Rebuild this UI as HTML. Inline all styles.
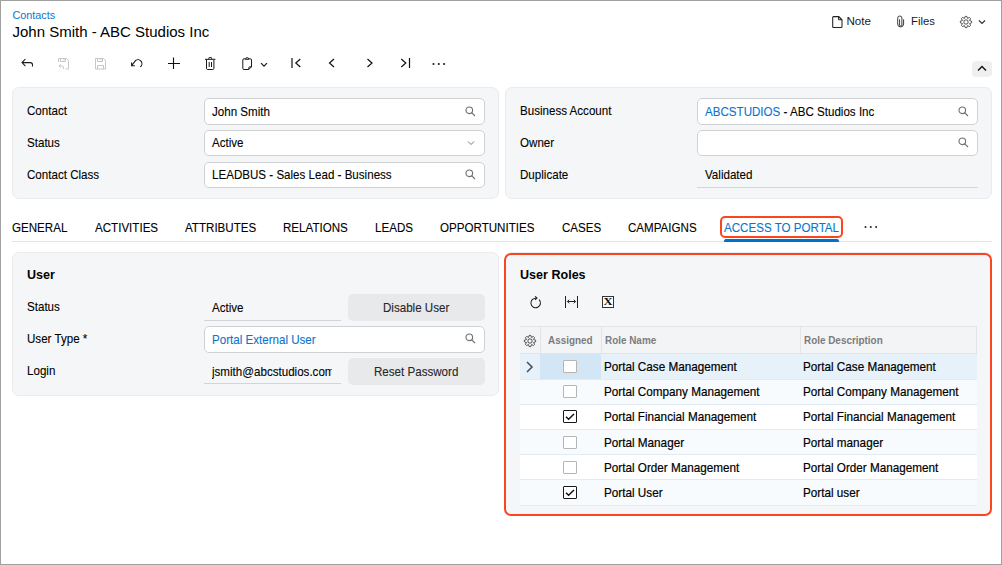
<!DOCTYPE html>
<html><head><meta charset="utf-8">
<style>
*{box-sizing:border-box;margin:0;padding:0}
html,body{width:1002px;height:565px;overflow:hidden;background:#fff}
body{position:relative;font-family:"Liberation Sans",sans-serif;font-size:11.6px;color:#000}
.frame{position:absolute;left:0;top:0;width:1002px;height:565px;border:1px solid #a0a0a0;z-index:50;pointer-events:none}
.a{position:absolute;white-space:nowrap}
.t{position:absolute;white-space:nowrap;line-height:14px;height:14px}
.panel{position:absolute;background:#f5f6f8;border:1px solid #e9ebee;border-radius:7px}
.fld{position:absolute;background:#fff;border:1px solid #cfd1d4;border-radius:5px;height:27px}
.ro{position:absolute;border-bottom:1px solid #d2d4d7;height:26px}
.btn{position:absolute;background:#e8e9eb;border-radius:5px;height:27px;text-align:center;line-height:27px;color:#262626}
svg{position:absolute;overflow:visible}
.blue{color:#0b75cd}
.s{font-size:12.4px;transform:scaleX(.935);transform-origin:0 0;-webkit-text-stroke:0.1px currentColor}
.g{transform:scaleX(.945);-webkit-text-stroke:0.2px currentColor}
.hd{font-weight:bold;font-size:10.6px;color:#7c7c7c;transform:scaleX(.935);transform-origin:0 0}
.cbx{width:13.5px;height:13px;background:#fff;border:1px solid #b5b5b5;border-radius:1px}
.cbx.on{border:1.4px solid #1a1a1a}
</style></head><body>
<div class="frame"></div>

<!-- header -->
<div class="t blue" style="left:12.5px;top:8px;font-size:10.8px">Contacts</div>
<div class="t" style="left:12.5px;top:23px;font-size:15px;line-height:17px;height:17px">John Smith - ABC Studios Inc</div>

<!-- top right -->
<svg style="left:831.5px;top:15.5px" width="11" height="12" viewBox="0 0 11 12"><path d="M1.5 .6h5.3l3.2 3.2v6.9a.8.8 0 0 1-.8.8H1.5a.8.8 0 0 1-.8-.8V1.4a.8.8 0 0 1 .8-.8z M6.6 .8v2.4a.6.6 0 0 0 .6.6h2.6" fill="none" stroke="#222" stroke-width="1.05"/></svg>
<div class="t" style="left:846.5px;top:14px;font-size:11.6px;color:#1a1a1a">Note</div>
<svg style="left:896px;top:15px" width="10" height="13" viewBox="0 0 10 13"><path d="M3.6 4.3V10A1.15 1.15 0 0 0 5.9 10V3.1A2.1 2.1 0 0 0 1.7 3.1V9A2.95 2.95 0 0 0 7.6 9V4.3" fill="none" stroke="#333" stroke-width="0.95"/></svg>
<div class="t" style="left:911px;top:14px;font-size:11.3px;color:#1a1a1a">Files</div>
<svg style="left:960px;top:16px" width="12" height="12" viewBox="0 0 12 12"><g fill="none" stroke="#444" stroke-width="1"><path d="M5.20 0.36 L6.80 0.36 L7.49 2.40 L9.42 1.44 L10.56 2.58 L9.60 4.51 L11.64 5.20 L11.64 6.80 L9.60 7.49 L10.56 9.42 L9.42 10.56 L7.49 9.60 L6.80 11.64 L5.20 11.64 L4.51 9.60 L2.58 10.56 L1.44 9.42 L2.40 7.49 L0.36 6.80 L0.36 5.20 L2.40 4.51 L1.44 2.58 L2.58 1.44 L4.51 2.40Z" stroke-linejoin="round" stroke-width=".95"/><rect x="4" y="4" width="4" height="4" rx="1.3"/></g></svg>
<svg style="left:977.5px;top:19px" width="8" height="6" viewBox="0 0 8 6"><path d="M1 1.5l3 3 3-3" fill="none" stroke="#333" stroke-width="1.2"/></svg>

<!-- toolbar -->
<svg style="left:21px;top:58px" width="13" height="10" viewBox="0 0 13 10"><path d="M4.4 1L1 4.6 4.4 8.2M1 4.6h8.4a2.1 2.1 0 0 1 2.1 2.1v1.8" fill="none" stroke="#1a1a1a" stroke-width="1.05"/></svg>
<svg style="left:57.5px;top:57.5px" width="12" height="12" viewBox="0 0 12 12"><g fill="none" stroke="#c6c6c6" stroke-width="1"><path d="M.5 4V.5h8l2 2v8.5H7.5"/><path d="M2.5 .5v3h5v-3M6 1v1.5"/><path d="M2.6 6.4L1 8l1.6 1.6M1 8h3.2a1.2 1.2 0 0 1 1.2 1.2V11"/></g></svg>
<svg style="left:94.5px;top:57.5px" width="12" height="12" viewBox="0 0 12 12"><g fill="none" stroke="#c6c6c6" stroke-width="1"><path d="M.5 .5h8l2 2v8.5H.5z"/><path d="M2.5 .5v3h5v-3M6 1v1.5M2.5 11V7.5h6V11"/></g></svg>
<svg style="left:130px;top:58px" width="14" height="11" viewBox="0 0 14 11"><path d="M10.2 8.9A3.9 3.9 0 1 0 5.7 2.4L1.6 7.6M1.6 4.4v3.3h3.3" fill="none" stroke="#1a1a1a" stroke-width="1.1"/></svg>
<svg style="left:168px;top:57px" width="12" height="12" viewBox="0 0 12 12"><path d="M5.5 .5v11.5M0 6.5h12" fill="none" stroke="#111" stroke-width="1.1"/></svg>
<svg style="left:205px;top:57px" width="11" height="13" viewBox="0 0 11 13"><g fill="none" stroke="#1a1a1a" stroke-width="1"><path d="M0 2.3h10.4M3.8 2.3V1.2a.7.7 0 0 1 .7-.7h1.4a.7.7 0 0 1 .7.7v1.1M1.5 2.3v9a1.2 1.2 0 0 0 1.2 1.2h5a1.2 1.2 0 0 0 1.2-1.2v-9M4.2 5v5M6.5 5v5"/></g></svg>
<svg style="left:241.5px;top:57px" width="11" height="13" viewBox="0 0 11 13"><g fill="none" stroke="#1a1a1a" stroke-width="1"><path d="M3.6 1.8H2a1.2 1.2 0 0 0-1.2 1.2v8.3A1.2 1.2 0 0 0 2 12.5h4.8l2.7-2.7V3a1.2 1.2 0 0 0-1.2-1.2H6.8"/><path d="M3.5 2.3a1.65 1.65 0 0 1 3.3 0z"/><path d="M6.8 12.4v-1.5a1.1 1.1 0 0 1 1.1-1.1h1.6"/></g></svg>
<svg style="left:259.7px;top:61.5px" width="8" height="6" viewBox="0 0 8 6"><path d="M1 1.2l3 3 3-3" fill="none" stroke="#1a1a1a" stroke-width="1.2"/></svg>
<svg style="left:290.5px;top:58px" width="11" height="11" viewBox="0 0 11 11"><path d="M1 0v10M9.3 1L4.8 5l4.5 4" fill="none" stroke="#111" stroke-width="1.2"/></svg>
<svg style="left:328px;top:58px" width="8" height="11" viewBox="0 0 8 11"><path d="M6 1L1.5 5 6 9" fill="none" stroke="#111" stroke-width="1.2"/></svg>
<svg style="left:365.5px;top:58px" width="8" height="11" viewBox="0 0 8 11"><path d="M1.5 1L6 5 1.5 9" fill="none" stroke="#111" stroke-width="1.2"/></svg>
<svg style="left:400px;top:58px" width="11" height="11" viewBox="0 0 11 11"><path d="M9.5 0v10M1.3 1l4.5 4-4.5 4" fill="none" stroke="#111" stroke-width="1.2"/></svg>
<svg style="left:431.5px;top:62px" width="14" height="4" viewBox="0 0 14 4"><g fill="#222"><circle cx="1.5" cy="2" r="1.1"/><circle cx="6.8" cy="2" r="1.1"/><circle cx="12.1" cy="2" r="1.1"/></g></svg>

<div class="a" style="left:972px;top:61px;width:20px;height:16px;background:#efefef;border-radius:4px"></div>
<svg style="left:977px;top:65px" width="10" height="7" viewBox="0 0 10 7"><path d="M1 5.5l4-4 4 4" fill="none" stroke="#111" stroke-width="1.35"/></svg>

<!-- top panels -->
<div class="panel" style="left:12px;top:87px;width:487px;height:112px"></div>
<div class="panel" style="left:505px;top:87px;width:487px;height:112px"></div>

<div class="t s" style="left:27px;top:104px">Contact</div>
<div class="t s" style="left:27px;top:136px">Status</div>
<div class="t s" style="left:27px;top:168px">Contact Class</div>
<div class="fld" style="left:204px;top:98px;width:281px;height:27px"></div>
<div class="t s" style="left:212px;top:104.7px">John Smith</div>
<div class="fld" style="left:204px;top:130px;width:281px;height:26px"></div>
<div class="t s" style="left:212px;top:136px">Active</div>
<div class="fld" style="left:204px;top:162px;width:281px;height:26px"></div>
<div class="t s" style="left:212px;top:168px">LEADBUS - Sales Lead - Business</div>

<div class="t s" style="left:520px;top:104px">Business Account</div>
<div class="t s" style="left:520px;top:136px">Owner</div>
<div class="t s" style="left:520px;top:168px">Duplicate</div>
<div class="fld" style="left:697px;top:98px;width:281px;height:27px"></div>
<div class="t s" style="left:705px;top:104.7px"><span class="blue">ABCSTUDIOS</span> - ABC Studios Inc</div>
<div class="fld" style="left:697px;top:130px;width:281px;height:26px"></div>
<div class="ro" style="left:697px;top:162px;width:281px"></div>
<div class="t s" style="left:705px;top:168px">Validated</div>

<!-- search icons / chevrons -->
<svg style="left:465px;top:106px" width="11" height="11" viewBox="0 0 11 11"><g fill="none" stroke="#707070" stroke-width="1.15"><circle cx="4.3" cy="4.3" r="3.3"/><path d="M6.8 6.8L10 10"/></g></svg>
<svg style="left:467px;top:140px" width="8" height="6" viewBox="0 0 8 6"><path d="M1 1.5l3 3 3-3" fill="none" stroke="#707070" stroke-width="0.95"/></svg>
<svg style="left:465px;top:169px" width="11" height="11" viewBox="0 0 11 11"><g fill="none" stroke="#707070" stroke-width="1.15"><circle cx="4.3" cy="4.3" r="3.3"/><path d="M6.8 6.8L10 10"/></g></svg>
<svg style="left:958px;top:106px" width="11" height="11" viewBox="0 0 11 11"><g fill="none" stroke="#707070" stroke-width="1.15"><circle cx="4.3" cy="4.3" r="3.3"/><path d="M6.8 6.8L10 10"/></g></svg>
<svg style="left:958px;top:137px" width="11" height="11" viewBox="0 0 11 11"><g fill="none" stroke="#707070" stroke-width="1.15"><circle cx="4.3" cy="4.3" r="3.3"/><path d="M6.8 6.8L10 10"/></g></svg>

<!-- tabs -->
<div class="a" style="left:12px;top:241px;width:980px;height:1px;background:#e3e4e6"></div>
<div class="t s" style="left:12px;top:221px">GENERAL</div>
<div class="t s" style="left:95px;top:221px">ACTIVITIES</div>
<div class="t s" style="left:185px;top:221px">ATTRIBUTES</div>
<div class="t s" style="left:283px;top:221px">RELATIONS</div>
<div class="t s" style="left:375px;top:221px">LEADS</div>
<div class="t s" style="left:440px;top:221px">OPPORTUNITIES</div>
<div class="t s" style="left:562px;top:221px">CASES</div>
<div class="t s" style="left:628px;top:221px">CAMPAIGNS</div>
<div class="t s blue" style="left:724px;top:221px">ACCESS TO PORTAL</div>
<div class="a" style="left:724px;top:239px;width:115px;height:3px;background:#0070c9;border-radius:2px 2px 0 0"></div>
<div class="a" style="left:720px;top:216px;width:123px;height:22px;border:2px solid #fb4521;border-radius:5px"></div>
<svg style="left:863.5px;top:225px" width="14" height="4" viewBox="0 0 14 4"><g fill="#222"><circle cx="1.5" cy="2" r="1"/><circle cx="6.8" cy="2" r="1"/><circle cx="12.1" cy="2" r="1"/></g></svg>

<!-- lower left panel -->
<div class="panel" style="left:12px;top:252px;width:487px;height:144px"></div>
<div class="t" style="left:27px;top:268.4px;font-weight:bold;font-size:13.5px;transform:scaleX(.93);transform-origin:0 0">User</div>
<div class="t s" style="left:27px;top:300px">Status</div>
<div class="t s" style="left:27px;top:332px">User Type *</div>
<div class="t s" style="left:27px;top:364px">Login</div>
<div class="ro" style="left:204px;top:295px;width:137px"></div>
<div class="t s" style="left:212px;top:301px">Active</div>
<div class="btn" style="left:348px;top:294px;width:137px"></div>
<div class="t s" style="left:383px;top:301px;color:#262626">Disable User</div>
<div class="fld" style="left:204px;top:326px;width:281px;height:27px"></div>
<div class="t s blue" style="left:212px;top:333px">Portal External User</div>
<svg style="left:465px;top:333px" width="11" height="11" viewBox="0 0 11 11"><g fill="none" stroke="#707070" stroke-width="1.15"><circle cx="4.3" cy="4.3" r="3.3"/><path d="M6.8 6.8L10 10"/></g></svg>
<div class="ro" style="left:204px;top:358px;width:137px"></div>
<div class="a s" style="left:212px;top:364.8px;width:127.6px;overflow:hidden;line-height:14px">jsmith@abcstudios.com</div>
<div class="btn" style="left:348px;top:358px;width:137px"></div>
<div class="t s" style="left:374px;top:364.8px;color:#262626">Reset Password</div>

<!-- lower right panel -->
<div class="panel" style="left:505px;top:252px;width:487px;height:264px"></div>
<div class="t" style="left:520px;top:268.4px;font-weight:bold;font-size:13.5px;transform:scaleX(.93);transform-origin:0 0">User Roles</div>

<!-- grid -->
<div class="a" style="left:504px;top:253px;width:488px;height:263px;border:2px solid #fb4521;border-radius:7px;z-index:5"></div>
<svg style="left:529.5px;top:295.5px" width="13" height="13" viewBox="0 0 13 13"><g fill="none" stroke="#1a1a1a" stroke-width="1.05"><path d="M9.2 3.7A4.8 4.8 0 1 1 6.3 2.2"/><path d="M5 .4L7 2.1 5 3.9"/></g></svg>
<svg style="left:564px;top:296px" width="15" height="12" viewBox="0 0 15 12"><g fill="none" stroke="#222" stroke-width="1"><path d="M1.5 0v12M13.5 0v12M3.5 5.5h8M5.2 3.7L3.4 5.5l1.8 1.8M9.8 3.7l1.8 1.8-1.8 1.8"/></g></svg>
<div class="a" style="left:602px;top:296px;width:12px;height:12px;border:1px solid #333;background:#fff"></div>
<div class="a" style="left:603px;top:295px;width:10px;text-align:center;font:bold 10.5px/14px 'Liberation Serif',serif;color:#111;transform:scaleX(1.2)">X</div>
<div class="a" style="left:520px;top:326px;width:457px;height:28px;background:#f3f4f6;border-top:1px solid #e3e4e6;border-bottom:1px solid #e3e4e6"></div>
<div class="a" style="left:540px;top:327px;width:1px;height:27px;background:#e3e4e6"></div>
<div class="a" style="left:601px;top:327px;width:1px;height:27px;background:#e3e4e6"></div>
<div class="a" style="left:800px;top:327px;width:1px;height:27px;background:#e3e4e6"></div>
<div class="a" style="left:976px;top:327px;width:1px;height:27px;background:#e3e4e6"></div>
<svg style="left:524px;top:334.5px" width="12" height="12" viewBox="0 0 12 12"><g fill="none" stroke="#444" stroke-width="1"><path d="M5.20 0.36 L6.80 0.36 L7.49 2.40 L9.42 1.44 L10.56 2.58 L9.60 4.51 L11.64 5.20 L11.64 6.80 L9.60 7.49 L10.56 9.42 L9.42 10.56 L7.49 9.60 L6.80 11.64 L5.20 11.64 L4.51 9.60 L2.58 10.56 L1.44 9.42 L2.40 7.49 L0.36 6.80 L0.36 5.20 L2.40 4.51 L1.44 2.58 L2.58 1.44 L4.51 2.40Z" stroke-linejoin="round" stroke-width=".95"/><rect x="4" y="4" width="4" height="4" rx="1.3"/></g></svg>
<div class="t hd" style="left:548px;top:333px">Assigned</div>
<div class="t hd" style="left:605px;top:333px">Role Name</div>
<div class="t hd" style="left:804px;top:333px">Role Description</div>
<div class="a" style="left:520px;top:354px;width:457px;height:26px;background:#e6f1fa;border-bottom:1px solid #e1ebf4"></div>
<div class="a" style="left:540px;top:354px;width:61px;height:25px;background:#d3e6f5"></div>
<svg style="left:525px;top:361px" width="10" height="12" viewBox="0 0 10 12"><path d="M2 1l5 5-5 5" fill="none" stroke="#4a5260" stroke-width="1.6"/></svg>
<div class="a cbx" style="left:563px;top:360px"></div>
<div class="t s g" style="left:604px;top:360px">Portal Case Management</div>
<div class="t s g" style="left:803px;top:360px">Portal Case Management</div>
<div class="a" style="left:520px;top:380px;width:457px;height:25px;background:#f8fbfe;border-bottom:1px solid #e1ebf4"></div>
<div class="a cbx" style="left:563px;top:385px"></div>
<div class="t s g" style="left:604px;top:385px">Portal Company Management</div>
<div class="t s g" style="left:803px;top:385px">Portal Company Management</div>
<div class="a" style="left:520px;top:405px;width:457px;height:25px;background:#fff;border-bottom:1px solid #e1ebf4"></div>
<div class="a cbx on" style="left:563px;top:410px"></div>
<svg style="left:565px;top:413px" width="10" height="8" viewBox="0 0 10 8"><path d="M1 3.8l2.6 2.4L9 1" fill="none" stroke="#111" stroke-width="1.5"/></svg>
<div class="t s g" style="left:604px;top:410px">Portal Financial Management</div>
<div class="t s g" style="left:803px;top:410px">Portal Financial Management</div>
<div class="a" style="left:520px;top:430px;width:457px;height:25px;background:#f8fbfe;border-bottom:1px solid #e1ebf4"></div>
<div class="a cbx" style="left:563px;top:436px"></div>
<div class="t s g" style="left:604px;top:436px">Portal Manager</div>
<div class="t s g" style="left:803px;top:436px">Portal manager</div>
<div class="a" style="left:520px;top:455px;width:457px;height:25px;background:#fff;border-bottom:1px solid #e1ebf4"></div>
<div class="a cbx" style="left:563px;top:461px"></div>
<div class="t s g" style="left:604px;top:461px">Portal Order Management</div>
<div class="t s g" style="left:803px;top:461px">Portal Order Management</div>
<div class="a" style="left:520px;top:480px;width:457px;height:26px;background:#f8fbfe;border-bottom:1px solid #e1ebf4"></div>
<div class="a cbx on" style="left:563px;top:486px"></div>
<svg style="left:565px;top:489px" width="10" height="8" viewBox="0 0 10 8"><path d="M1 3.8l2.6 2.4L9 1" fill="none" stroke="#111" stroke-width="1.5"/></svg>
<div class="t s g" style="left:604px;top:486px">Portal User</div>
<div class="t s g" style="left:803px;top:486px">Portal user</div>
</body></html>
